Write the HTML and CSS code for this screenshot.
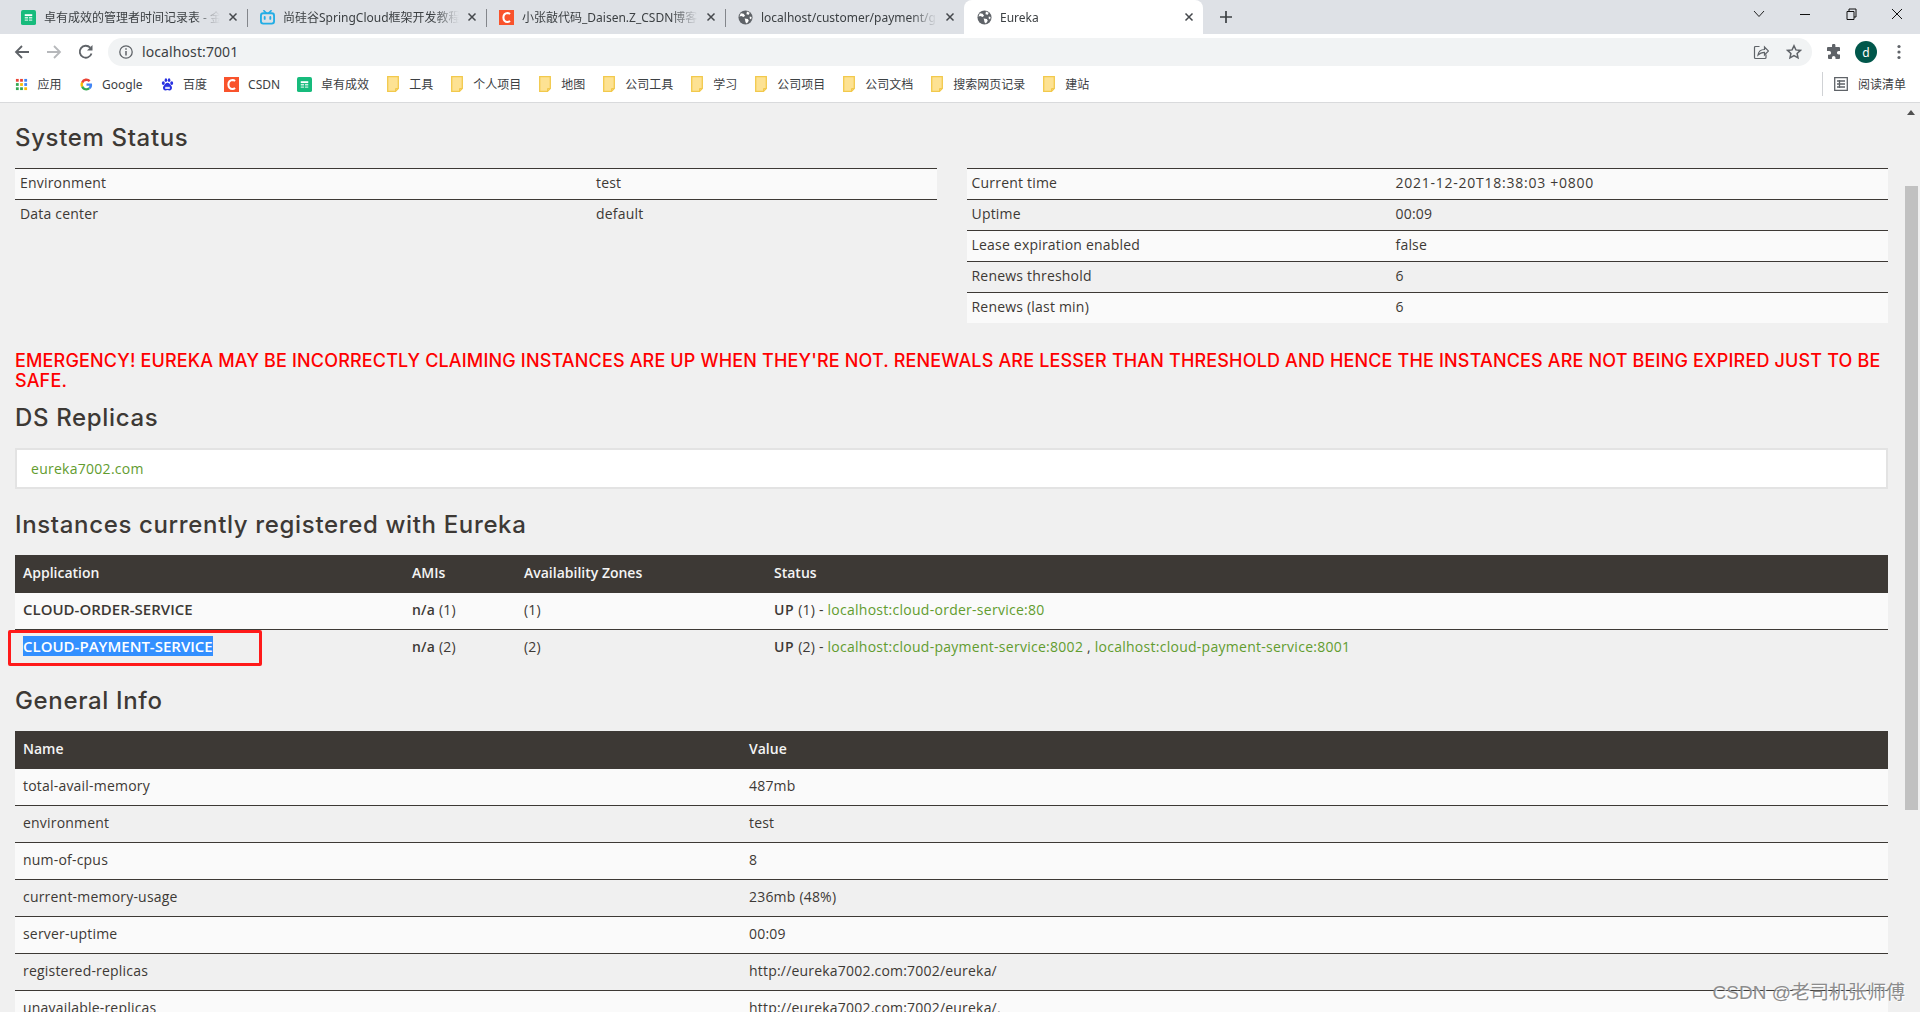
FILE: index.html
```html
<!DOCTYPE html>
<html lang="zh-CN">
<head>
  <meta charset="UTF-8">
  <title>Eureka</title>
  <link rel="stylesheet" href="styles.css">
</head>
<body>

  <svg class="defs" width="0" height="0">
    <symbol id="i-sheet" viewBox="0 0 16 16">
      <rect width="16" height="16" rx="2" fill="#17bb7c"/>
      <path d="M4 4.500h8v2H4z" fill="#fff"/>
      <path d="M4 7.500h3.500v1.500H4zM4 10h3.500v1.500H4zM8.500 7.500H12v1.500H8.500zM8.500 10H12v1.500H8.500z" fill="#c8f0e0"/>
    </symbol>
    <symbol id="i-csdn" viewBox="0 0 16 16">
      <rect width="16" height="16" fill="#f9532c"/>
      <path d="M11.800 4.300A4.800 4.800 0 0 0 9 3.200C6.500 3.200 4.700 5.200 4.700 8s1.800 4.800 4.300 4.800a4.800 4.800 0 0 0 2.800-1.100" fill="none" stroke="#fff" stroke-width="2.200"/>
    </symbol>
    <symbol id="i-tv" viewBox="0 0 16 16">
      <path d="M4.200 .8l2.600 2.600M11.800 .8L9.200 3.400" stroke="#23ade5" stroke-width="1.800" stroke-linecap="round"/>
      <rect x="1" y="3.500" width="14" height="11" rx="2.500" fill="none" stroke="#23ade5" stroke-width="2"/>
      <path d="M5 7.500v2M11 7.500v2" stroke="#23ade5" stroke-width="2" stroke-linecap="round"/>
    </symbol>
    <symbol id="i-globe" viewBox="0 0 16 16">
      <circle cx="8" cy="8" r="7.500" fill="#5f6368"/>
      <path d="M3 3.500l3 .5 1.500 2L6 7.500 3.500 6.500 1.500 7zM9.500 1.500l3 1.500-1 2-2.500-.5zM7 9l3.500.5 1 2-2 3-1.500-1.500-.5-2.500zM12.500 7l2 .5-.5 2.500-1.500-1z" fill="#fff"/>
    </symbol>
    <symbol id="i-x" viewBox="0 0 10 10">
      <path d="M1.500 1.500l7 7M8.500 1.500l-7 7" stroke="#45484c" stroke-width="1.500"/>
    </symbol>
    <symbol id="i-folder" viewBox="0 0 12 16">
      <path d="M.7.700h10.600v11.800l-2.800 2.800H.7z" fill="#fde293" stroke="#f2c94c" stroke-width="1.300"/>
      <path d="M8.500 15.300v-2.800h2.800" fill="none" stroke="#f2c94c" stroke-width="1"/>
    </symbol>
  </svg>

  <header class="browser">
    <div class="tabstrip">
      <div class="tab">
        <svg class="favicon"><use href="#i-sheet"/></svg>
        <span class="tab-title">卓有成效的管理者时间记录表 - 金</span>
        <svg class="tab-close"><use href="#i-x"/></svg>
      </div>
      <div class="tab">
        <svg class="favicon"><use href="#i-tv"/></svg>
        <span class="tab-title">尚硅谷SpringCloud框架开发教程</span>
        <svg class="tab-close"><use href="#i-x"/></svg>
      </div>
      <div class="tab">
        <svg class="favicon"><use href="#i-csdn"/></svg>
        <span class="tab-title">小张敲代码_Daisen.Z_CSDN博客</span>
        <svg class="tab-close"><use href="#i-x"/></svg>
      </div>
      <div class="tab tab-last">
        <svg class="favicon"><use href="#i-globe"/></svg>
        <span class="tab-title">localhost/customer/payment/g</span>
        <svg class="tab-close"><use href="#i-x"/></svg>
      </div>
      <div class="tab tab-active">
        <svg class="favicon"><use href="#i-globe"/></svg>
        <span class="tab-title">Eureka</span>
        <svg class="tab-close"><use href="#i-x"/></svg>
      </div>
      <svg class="new-tab" viewBox="0 0 14 14"><path d="M7 1v12M1 7h12" stroke="#3c4043" stroke-width="1.700"/></svg>
      <div class="window-btns">
        <svg class="win-btn" viewBox="0 0 46 14"><path d="M18 4l5 5.500L28 4" fill="none" stroke="#222" stroke-width="1"/></svg>
        <svg class="win-btn" viewBox="0 0 46 14"><path d="M18 7.500h10" stroke="#111" stroke-width="1"/></svg>
        <svg class="win-btn" viewBox="0 0 46 14"><path d="M19 4.500h7v8h-7zM21 4.500V2h7v8h-2" fill="none" stroke="#111" stroke-width="1"/></svg>
        <svg class="win-btn" viewBox="0 0 46 14"><path d="M18 2l10 10M28 2L18 12" stroke="#111" stroke-width="1"/></svg>
      </div>
    </div>

    <div class="toolbar">
      <svg class="nav-icon" viewBox="0 0 16 16"><path d="M15 8H2M8 2L2 8l6 6" fill="none" stroke="#5f6368" stroke-width="1.800"/></svg>
      <svg class="nav-icon" viewBox="0 0 16 16"><path d="M1 8h13M8 2l6 6-6 6" fill="none" stroke="#b6b8bb" stroke-width="1.800"/></svg>
      <svg class="nav-icon" viewBox="0 0 16 16"><path d="M13.500 9.500A6 6 0 1 1 12.200 3.700" fill="none" stroke="#5f6368" stroke-width="1.800"/><path d="M14.500 1v5.500H9z" fill="#5f6368"/></svg>
      <div class="omnibox">
        <svg class="info-icon" viewBox="0 0 14 14"><circle cx="7" cy="7" r="6.200" fill="none" stroke="#5f6368" stroke-width="1.300"/><path d="M7 6v4.500M7 3.300v1.500" stroke="#5f6368" stroke-width="1.500"/></svg>
        <span class="url">localhost:7001</span>
        <svg class="omni-icon share" viewBox="0 0 16 16"><path d="M6.500 2.500h-4a1 1 0 0 0-1 1v10a1 1 0 0 0 1 1h9.500a1 1 0 0 0 1-1V10.500" fill="none" stroke="#5f6368" stroke-width="1.200"/><path d="M5 11c.5-3.500 3-5.500 6.500-5.500V3l4 4-4 4V8.300C9 8.300 6.800 9 5 11z" fill="none" stroke="#5f6368" stroke-width="1.200"/></svg>
        <svg class="omni-icon star" viewBox="0 0 16 16"><path d="M8 1.800l1.900 4.100 4.500.5-3.300 3 .9 4.400L8 11.600l-4 2.200.9-4.400-3.300-3 4.500-.5z" fill="none" stroke="#5f6368" stroke-width="1.500"/></svg>
      </div>
      <svg class="puzzle" viewBox="0 0 16 16"><path d="M6 1.500a1.700 1.700 0 0 1 3.400 0V3H13a1 1 0 0 1 1 1v3h-1.300a1.800 1.800 0 0 0 0 3.600H14V14a1 1 0 0 1-1 1H9.500v-1.300a1.800 1.800 0 0 0-3.600 0V15H3a1 1 0 0 1-1-1v-3.300H3.300a1.800 1.800 0 0 0 0-3.600H1V4a1 1 0 0 1 1-1h4z" fill="#5f6368"/></svg>
      <span class="avatar">d</span>
      <svg class="menu-dots" viewBox="0 0 4 16"><circle cx="2" cy="2.500" r="1.600" fill="#5f6368"/><circle cx="2" cy="8" r="1.600" fill="#5f6368"/><circle cx="2" cy="13.500" r="1.600" fill="#5f6368"/></svg>
    </div>

    <nav class="bookmarks">
      <a class="bm">
        <svg class="bm-icon" viewBox="0 0 14 14">
          <path d="M1 1h3v3H1z" fill="#ea4335"/><path d="M5.500 1h3v3h-3z" fill="#ea4335"/><path d="M10 1h3v3h-3z" fill="#4285f4"/>
          <path d="M1 5.500h3v3H1z" fill="#34a853"/><path d="M5.500 5.500h3v3h-3z" fill="#fbbc05"/><path d="M10 5.500h3v3h-3z" fill="#4285f4"/>
          <path d="M1 10h3v3H1z" fill="#34a853"/><path d="M5.500 10h3v3h-3z" fill="#34a853"/><path d="M10 10h3v3h-3z" fill="#fbbc05"/>
        </svg>应用</a>
      <a class="bm">
        <svg class="bm-icon" viewBox="0 0 14 14">
          <path d="M12.800 5.800H7v2.500h3.300a3.300 3.300 0 0 1-1.300 2l2 1.600a6 6 0 0 0 1.800-6.100z" fill="#4285f4"/>
          <path d="M7 13.500a6.300 6.300 0 0 0 4-1.600l-2-1.600A3.600 3.600 0 0 1 3.400 8.400l-2.100 1.600A6.400 6.400 0 0 0 7 13.500z" fill="#34a853"/>
          <path d="M3.400 8.400a3.700 3.700 0 0 1 0-2.800L1.300 4a6.400 6.400 0 0 0 0 6z" fill="#fbbc05"/>
          <path d="M7 3.200a3.500 3.500 0 0 1 2.500 1L11.300 2.400A6.200 6.200 0 0 0 1.300 4l2.100 1.600A3.800 3.800 0 0 1 7 3.200z" fill="#ea4335"/>
        </svg>Google</a>
      <a class="bm">
        <svg class="bm-icon" viewBox="0 0 14 14">
          <ellipse cx="2.500" cy="5.500" rx="1.600" ry="2" fill="#2932e1"/><ellipse cx="5.300" cy="2.300" rx="1.400" ry="1.900" fill="#2932e1"/>
          <ellipse cx="8.700" cy="2.300" rx="1.400" ry="1.900" fill="#2932e1"/><ellipse cx="11.500" cy="5.500" rx="1.600" ry="2" fill="#2932e1"/>
          <path d="M7 5.200c-2 0-2.700 2-4 3.200-1.600 1.600-.8 5 1.700 5 1 0 1.600-.4 2.300-.4s1.300.4 2.300.4c2.500 0 3.300-3.400 1.700-5C9.700 7.200 9 5.200 7 5.200z" fill="#2932e1"/>
          <path d="M4.500 9.500h5v2.300h-5z" fill="#dfe2fb"/>
        </svg>百度</a>
      <a class="bm"><svg class="bm-icon bm-icon-lg"><use href="#i-csdn"/></svg>CSDN</a>
      <a class="bm"><svg class="bm-icon bm-icon-lg"><use href="#i-sheet"/></svg>卓有成效</a>
      <a class="bm"><svg class="folder"><use href="#i-folder"/></svg>工具</a>
      <a class="bm"><svg class="folder"><use href="#i-folder"/></svg>个人项目</a>
      <a class="bm"><svg class="folder"><use href="#i-folder"/></svg>地图</a>
      <a class="bm"><svg class="folder"><use href="#i-folder"/></svg>公司工具</a>
      <a class="bm"><svg class="folder"><use href="#i-folder"/></svg>学习</a>
      <a class="bm"><svg class="folder"><use href="#i-folder"/></svg>公司项目</a>
      <a class="bm"><svg class="folder"><use href="#i-folder"/></svg>公司文档</a>
      <a class="bm"><svg class="folder"><use href="#i-folder"/></svg>搜索网页记录</a>
      <a class="bm"><svg class="folder"><use href="#i-folder"/></svg>建站</a>
      <a class="bm reading-list">
        <svg class="bm-icon reading-icon" viewBox="0 0 14 14"><path d="M.7.700h12.600v12.600H.7zM3 4h8M3 7h8M3 10h8M5.500 3v8" fill="none" stroke="#5f6368" stroke-width="1.300"/></svg>阅读清单</a>
    </nav>
  </header>

  <div class="viewport">
    <main class="content">
      <h1 class="section-title">System Status</h1>
      <div class="status-grid">
        <table class="status-table status-left">
          <tr><td>Environment</td><td>test</td></tr>
          <tr><td>Data center</td><td>default</td></tr>
        </table>
        <table class="status-table status-right">
          <tr><td>Current time</td><td class="timestamp">2021-12-20T18:38:03 +0800</td></tr>
          <tr><td>Uptime</td><td>00:09</td></tr>
          <tr><td>Lease expiration enabled</td><td>false</td></tr>
          <tr><td>Renews threshold</td><td>6</td></tr>
          <tr><td>Renews (last min)</td><td>6</td></tr>
        </table>
      </div>

      <h4 class="emergency">EMERGENCY! EUREKA MAY BE INCORRECTLY CLAIMING INSTANCES ARE UP WHEN THEY'RE NOT. RENEWALS ARE LESSER THAN THRESHOLD AND HENCE THE INSTANCES ARE NOT BEING EXPIRED JUST TO BE SAFE.</h4>

      <h1 class="section-title">DS Replicas</h1>
      <div class="replicas"><a class="link">eureka7002.com</a></div>

      <h1 class="section-title title-instances">Instances currently registered with Eureka</h1>
      <table class="data-table instances">
        <thead>
          <tr><th>Application</th><th>AMIs</th><th>Availability Zones</th><th>Status</th></tr>
        </thead>
        <tbody>
          <tr>
            <td><b class="app-name">CLOUD-ORDER-SERVICE</b></td>
            <td><b>n/a</b> (1)</td>
            <td>(1)</td>
            <td><b class="up-label">UP</b> (1) - <a class="link">localhost:cloud-order-service:80</a></td>
          </tr>
          <tr>
            <td><b class="app-name selected">CLOUD-PAYMENT-SERVICE</b></td>
            <td><b>n/a</b> (2)</td>
            <td>(2)</td>
            <td><b class="up-label">UP</b> (2) - <a class="link">localhost:cloud-payment-service:8002</a> , <a class="link">localhost:cloud-payment-service:8001</a></td>
          </tr>
        </tbody>
      </table>

      <h1 class="section-title title-general">General Info</h1>
      <table class="data-table general">
        <thead>
          <tr><th>Name</th><th>Value</th></tr>
        </thead>
        <tbody>
          <tr><td>total-avail-memory</td><td>487mb</td></tr>
          <tr><td>environment</td><td>test</td></tr>
          <tr><td>num-of-cpus</td><td>8</td></tr>
          <tr><td>current-memory-usage</td><td>236mb (48%)</td></tr>
          <tr><td>server-uptime</td><td>00:09</td></tr>
          <tr><td>registered-replicas</td><td>http://eureka7002.com:7002/eureka/</td></tr>
          <tr><td>unavailable-replicas</td><td>http://eureka7002.com:7002/eureka/,</td></tr>
        </tbody>
      </table>
    </main>

    <div class="scrollbar">
      <span class="scroll-up"></span>
      <span class="scroll-thumb"></span>
    </div>

    <div class="red-mark"></div>
    <div class="watermark">CSDN @老司机张师傅</div>
  </div>

</body>
</html>
```

FILE: styles.css
```css
* { box-sizing: border-box; margin: 0; padding: 0; }
html, body { height: 100%; }
body {
  display: flex;
  flex-direction: column;
  overflow: hidden;
  background: #f0f0f0;
  color: #3d3935;
  font-family: "Open Sans", "Noto Sans CJK SC", sans-serif;
  font-size: 14px;
}
.defs { position: absolute; }

/* browser chrome */
.browser {
  flex: none;
  background: #fff;
  border-bottom: 1px solid #d9dadc;
  font-family: "Noto Sans", "Noto Sans CJK SC", sans-serif;
  color: #3c4043;
}
.tabstrip {
  display: flex;
  height: 34px;
  padding-left: 8px;
  background: #dee1e6;
}
.tab {
  position: relative;
  display: flex;
  align-items: center;
  width: 239px;
  padding: 0 9px 0 13px;
  font-size: 12px;
  white-space: nowrap;
}
.tab::after {
  content: "";
  position: absolute;
  right: -1px;
  top: 9px;
  height: 18px;
  border-right: 1px solid #83868b;
}
.tab-last::after, .tab-active::after { display: none; }
.tab-active {
  background: #fff;
  border-radius: 8px 8px 0 0;
}
.favicon {
  flex: none;
  width: 15px;
  height: 15px;
  margin-right: 8px;
}
.tab-title {
  flex: 1;
  overflow: hidden;
  -webkit-mask-image: linear-gradient(to right, #000 85%, transparent 100%);
  mask-image: linear-gradient(to right, #000 85%, transparent 100%);
}
.tab-close {
  flex: none;
  width: 10px;
  height: 10px;
  margin-left: 8px;
}
.new-tab {
  width: 14px;
  height: 14px;
  margin: 10px 0 0 16px;
}
.window-btns {
  display: flex;
  align-items: center;
  margin-left: auto;
  padding-bottom: 6px;
}
.win-btn {
  width: 46px;
  height: 14px;
}

.toolbar {
  display: flex;
  align-items: center;
  height: 32px;
  padding-top: 4px;
}
.nav-icon {
  flex: none;
  width: 16px;
  height: 16px;
  margin-left: 16px;
}
.nav-icon:first-child { margin-left: 14px; }
.omnibox {
  flex: 1;
  display: flex;
  align-items: center;
  height: 28px;
  margin-left: 14px;
  padding-left: 11px;
  background: #f1f3f4;
  border-radius: 14px;
}
.info-icon {
  width: 14px;
  height: 14px;
  margin-right: 9px;
}
.url {
  flex: 1;
  padding-bottom: 2px;
  font-size: 14px;
  letter-spacing: 0.1px;
}
.omni-icon {
  width: 16px;
  height: 16px;
}
.share { margin-right: 17px; }
.star { margin-right: 10px; }
.puzzle {
  width: 16px;
  height: 16px;
  margin-left: 14px;
}
.avatar {
  display: flex;
  align-items: center;
  justify-content: center;
  width: 22px;
  height: 22px;
  margin-left: 13px;
  background: #00574b;
  border-radius: 50%;
  color: #fff;
  font-size: 12px;
}
.menu-dots {
  width: 4px;
  height: 16px;
  margin: 0 19px 0 20px;
}

.bookmarks {
  display: flex;
  align-items: center;
  height: 36px;
  padding-left: 15px;
  gap: 18px;
  font-size: 12px;
}
.bm {
  display: flex;
  align-items: center;
  white-space: nowrap;
}
.bm-icon {
  width: 13px;
  height: 13px;
  margin-right: 9.5px;
}
.bm-icon-lg {
  width: 15px;
  height: 15px;
  margin-left: -1px;
  margin-right: 9px;
}
.folder {
  width: 12px;
  height: 16px;
  margin-right: 10px;
}
.reading-list {
  margin-left: auto;
  padding: 3px 14px 3px 11px;
  border-left: 1px solid #d0d2d5;
}
.reading-icon {
  width: 14px;
  height: 14px;
}

/* eureka page */
.viewport {
  position: relative;
  flex: 1;
  display: flex;
  overflow: hidden;
}
.content {
  flex: 1;
  padding: 22px 15px 0;
}
.section-title {
  margin-bottom: 17px;
  font-family: Inter, "Open Sans", sans-serif;
  font-size: 24px;
  font-weight: 500;
  letter-spacing: 0.65px;
  line-height: 26px;
}
.status-grid {
  display: flex;
  gap: 30px;
  align-items: flex-start;
}
table {
  width: 100%;
  border-collapse: separate;
  border-spacing: 0;
  table-layout: fixed;
}
td { letter-spacing: 0.2px; }
.status-table td {
  padding: 4px 5px 6px;
  line-height: 20px;
  border-top: 1px solid #3d3935;
}
.status-table tr:nth-child(odd) td { background: #fafafa; }
.status-left td:first-child { width: 576px; }
.status-right td:first-child { width: 424px; }
.status-table .timestamp { letter-spacing: 0.75px; }

.emergency {
  margin: 28px 0 14px;
  color: #f00;
  font-family: Inter, "Open Sans", sans-serif;
  font-size: 18px;
  font-weight: 500;
  letter-spacing: 0.16px;
  line-height: 20px;
}
.replicas {
  height: 41px;
  padding: 9px 14px;
  background: #fff;
  border: 2px solid #e3e3e3;
  line-height: 20px;
  letter-spacing: 0.2px;
}
.link {
  color: #629c2f;
  letter-spacing: 0.27px;
}
.title-instances { margin-top: 23px; }
.title-general { margin-top: 22px; }

.data-table th {
  padding: 8px 8px 10px;
  background: #3d3935;
  color: #f4f4f4;
  font-weight: 600;
  line-height: 20px;
  text-align: left;
}
.data-table td {
  padding: 7px 8px 9px;
  line-height: 20px;
  border-top: 1px solid #3d3935;
}
.data-table tbody tr:first-child td { border-top: 0; }
.data-table tbody tr:nth-child(odd) td { background: #fafafa; }
.data-table b { font-weight: 600; }
.instances th:nth-child(1) { width: 389px; }
.instances th:nth-child(2) { width: 112px; }
.instances th:nth-child(3) { width: 250px; }
.general th:nth-child(1) { width: 726px; }
.data-table .app-name {
  font-size: 15px;
  letter-spacing: 0;
  line-height: 14px;
}
.data-table .up-label { letter-spacing: 0.7px; }
.selected {
  background: #3390ff;
  color: #fff;
}

.scrollbar {
  flex: none;
  position: relative;
  width: 17px;
}
.scroll-up {
  position: absolute;
  top: 7px;
  left: 4px;
  border: 4px solid transparent;
  border-top: 0;
  border-bottom: 5px solid #505050;
}
.scroll-thumb {
  position: absolute;
  top: 83px;
  bottom: 202px;
  left: 2px;
  right: 2px;
  background: #c1c1c1;
}

/* annotations on top of the screenshot */
.red-mark {
  position: absolute;
  left: 8px;
  top: 527px;
  width: 254px;
  height: 36px;
  border: 3px solid #ff1a1a;
  border-radius: 2px;
}
.watermark {
  position: absolute;
  right: 15px;
  bottom: 7px;
  color: #8c8c8c;
  font-family: "Liberation Sans", "Noto Sans CJK SC", sans-serif;
  font-size: 19px;
  line-height: 24px;
  text-shadow: 1px 1px 1px #fff;
}
```
